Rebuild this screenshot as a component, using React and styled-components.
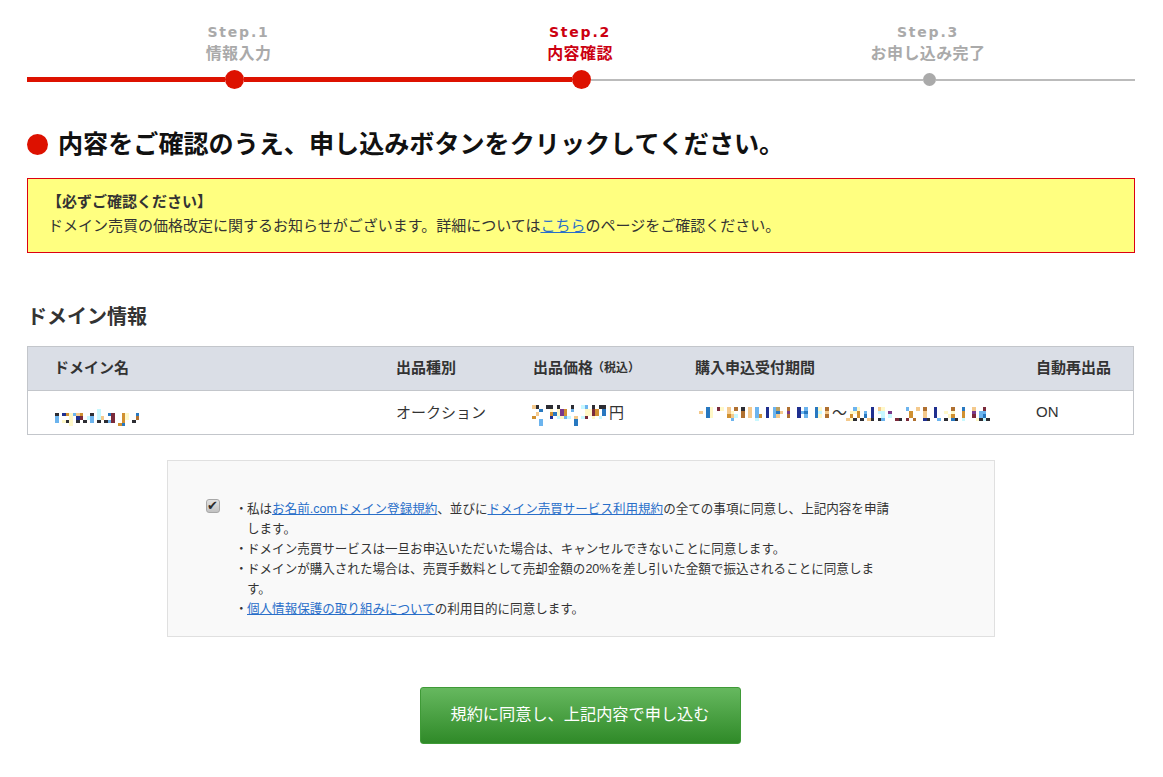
import React from 'react';
import styled, { createGlobalStyle } from 'styled-components';

const Global = createGlobalStyle`
  html, body { margin: 0; padding: 0; background: #fff; }
  body { font-family: "Liberation Sans", "Noto Sans CJK JP", sans-serif; color: #333; }
  * { box-sizing: border-box; }
`;
const Page = styled.div`
  width: 1163px;
  height: 777px;
  overflow: hidden;
  padding: 23px 28px 0 27px;
`;
const StepLabels = styled.div`
  display: grid;
  grid-template-columns: 341px 342px 354px;
  padding-left: 41px;
`;
const StepLabel = styled.div`
  text-align: center;
  font-weight: 700;
  color: ${p => (p.$active ? '#cc0011' : '#aaa')};
`;
const StepNum = styled.div`
  font-family: "DejaVu Sans", sans-serif;
  font-size: 14px;
  line-height: 19px;
  letter-spacing: 1.8px;
`;
const StepName = styled.div`
  font-size: 16px;
  line-height: 22px;
  letter-spacing: 0.4px;
  padding-top: 1px;
`;
const Track = styled.div`
  display: flex;
  align-items: center;
  height: 19px;
  margin-top: 5px;
`;
const Line = styled.div`
  height: ${p => (p.$on ? 5 : 2)}px;
  background: ${p => (p.$on ? '#dd1100' : '#bbb')};
  flex: ${p => (p.$w ? `0 0 ${p.$w}px` : '1')};
`;
const Dot = styled.div`
  flex: none;
  width: ${p => (p.$on ? 19 : 13)}px;
  height: ${p => (p.$on ? 19 : 13)}px;
  border-radius: 50%;
  background: ${p => (p.$on ? '#dd1100' : '#aaa')};
`;
const Heading = styled.h1`
  display: flex;
  align-items: center;
  gap: 10px;
  margin: 37px 0 0;
  font-size: 25.1px;
  line-height: 36px;
  font-weight: 700;
  color: #111;
  &::before {
    content: "";
    width: 21px;
    height: 21px;
    border-radius: 50%;
    background: #dd1100;
  }
`;
const Notice = styled.div`
  margin-top: 16px;
  height: 75px;
  padding: 11px 20px 0;
  background: #ffff80;
  border: 1px solid #dd0011;
  font-size: 15px;
  line-height: 24px;
  color: #333;
`;
const NoticeTitle = styled.div`
  font-weight: 700;
  margin-left: -1px;
`;
const Link = styled.a`
  color: #2a6fc9;
  text-decoration: underline;
`;
const SectionTitle = styled.h2`
  margin: 49px 0 0;
  font-size: 20px;
  line-height: 30px;
  font-weight: 700;
  color: #333;
`;
const Table = styled.div`
  margin-top: 14px;
  width: 1107px;
  border: 1px solid #c3c6cb;
`;
const Row = styled.div`
  display: grid;
  grid-template-columns: 342px 137px 162px 341px 1fr;
  padding-left: 26px;
  height: ${p => (p.$head ? 44 : 43)}px;
  align-items: center;
  font-size: 15px;
  background: ${p => (p.$head ? '#dadee6' : '#fff')};
  border-bottom: ${p => (p.$head ? '1px solid #c3c6cb' : 'none')};
  font-weight: ${p => (p.$head ? 700 : 400)};
  color: #333;
`;
const Small = styled.span`
  font-size: 12px;
  margin-left: -1px;
`;
const Cell = styled.div`
  display: flex;
  align-items: center;
  margin-top: ${p => (p.$head ? -4 : -3)}px;
`;
const Mosaic = styled.svg`
  display: block;
  flex: none;
  shape-rendering: crispEdges;
  margin: ${p => p.$mt || 0}px 0 0 ${p => p.$ml || 0}px;
`;
const Tilde = styled.span`
  margin: 0 -1px 0 0;
`;
const Agree = styled.div`
  display: flex;
  margin: 25px 0 0 140px;
  width: 828px;
  height: 177px;
  padding: 38px 0 0 38px;
  background: #f9f9f9;
  border: 1px solid #e0e0e0;
`;
const Check = styled.input`
  appearance: none;
  position: relative;
  flex: none;
  width: 14px;
  height: 14px;
  margin: 0 15px 0 0;
  border: 1px solid #a8a8a8;
  border-radius: 3px;
  background: linear-gradient(#e2e2e2, #c2c2c2);
  &::after {
    content: "✔";
    position: absolute;
    left: 0;
    top: -1px;
    font: 13px/14px "DejaVu Sans", sans-serif;
    color: #2b2b2b;
  }
`;
const Terms = styled.ul`
  list-style: none;
  margin: 0;
  padding: 0;
  width: 656px;
  font-size: 12.55px;
  line-height: 20px;
  color: #333;
`;
const Term = styled.li`
  padding-left: 12px;
  text-indent: -12px;
  &::before {
    content: "・";
    display: inline-block;
    width: 12px;
    text-indent: 0;
  }
`;
const Actions = styled.div`
  display: flex;
  justify-content: center;
  margin: 50px 0 0 -2px;
`;
const Submit = styled.button`
  width: 321px;
  height: 57px;
  padding: 0 0 5px;
  font: inherit;
  font-size: 16.2px;
  color: #fff;
  border: 1px solid #3f9a37;
  border-radius: 3px;
  background: linear-gradient(#66b85f, #2f8a28);
`;

const colors = {
  d: '#2d2d33', b: '#6cb4ee', t: '#f4c98c', o: '#d09030', n: '#1f2f8f', c: '#c8f8ff',
  y: '#fff8c8', r: '#7a2a3a', B: '#2878c0', p: '#7a3a8a', g: '#bba060', k: '#b07030',
};
const CELL = 3.5;
function MosaicText({ rows, mt, ml }) {
  const w = rows[0].length * CELL;
  const h = rows.length * CELL;
  return (
    <Mosaic $mt={mt} $ml={ml} width={w} height={h} viewBox={`0 0 ${w} ${h}`}>
      {rows.flatMap((row, y) =>
        [...row].map((ch, x) =>
          ch === '.' ? null : <rect key={`${x}-${y}`} x={x * CELL} y={y * CELL} width={CELL} height={CELL} fill={colors[ch]} />
        )
      )}
    </Mosaic>
  );
}
const domainRows = [
  '............c...........',
  'd.noybto..d.c..Br..oy..B',
  'b...y.nr.cb.ct..r..oy..k',
  'b.ydy.d.d.b.d.dbr..o..d.',
  '....y.............oB....',
];
const priceRows = [
  'td..dd.d...d..cb.d.dd.',
  '..B..y.ypo.b...yyro.B.',
  '.t...oBypo.....yyro.B.',
  'o....n.cybc.t.cr.y.c..',
  '..b.........B.........',
  '..b.........B.........',
];
const fromRows = [
  '..By.ry.t.k.d.t.b..n.bg..k..n.b..By.k.',
  't.By....ty..k.t.b..n.bBt.p..nbB..Bc.t.',
  '..By....otc.k.t.bo.n.bt..k..n.b..By.k.',
  '.........b......c.....................',
];
const toRows = [
  '..by...n.ty......b..t.k..n....k..B..t..r.',
  '.yyo.b.n.cc.p.....o...t..n..y.y..o..p.bb.',
  '.o.o.B.n..c.c.....o...t..n...yo..o..r.bB.',
  'tyd.d.td.db...rd.r.k..nd..b.d.Bd.c...ydcd',
];

export default function App() {
  return (
    <Page>
      <Global />
      <StepLabels>
        <StepLabel><StepNum>Step.1</StepNum><StepName>情報入力</StepName></StepLabel>
        <StepLabel $active><StepNum>Step.2</StepNum><StepName>内容確認</StepName></StepLabel>
        <StepLabel><StepNum>Step.3</StepNum><StepName>お申し込み完了</StepName></StepLabel>
      </StepLabels>
      <Track>
        <Line $on $w={198} />
        <Dot $on />
        <Line $on $w={328} />
        <Dot $on />
        <Line $w={332} />
        <Dot />
        <Line />
      </Track>
      <Heading>内容をご確認のうえ、申し込みボタンをクリックしてください。</Heading>
      <Notice>
        <NoticeTitle>【必ずご確認ください】</NoticeTitle>
        ドメイン売買の価格改定に関するお知らせがございます。詳細については<Link href="#">こちら</Link>のページをご確認ください。
      </Notice>
      <SectionTitle>ドメイン情報</SectionTitle>
      <Table>
        <Row $head>
          <Cell $head>ドメイン名</Cell>
          <Cell $head>出品種別</Cell>
          <Cell $head>出品価格<Small>（税込）</Small></Cell>
          <Cell $head>購入申込受付期間</Cell>
          <Cell $head>自動再出品</Cell>
        </Row>
        <Row>
          <Cell><MosaicText rows={domainRows} mt={13} ml={1} /></Cell>
          <Cell>オークション</Cell>
          <Cell><MosaicText rows={priceRows} mt={9} ml={-1} />円</Cell>
          <Cell><MosaicText rows={fromRows} mt={6} ml={4} /><Tilde>～</Tilde><MosaicText rows={toRows} mt={6} /></Cell>
          <Cell>ON</Cell>
        </Row>
      </Table>
      <Agree>
        <Check type="checkbox" defaultChecked />
        <Terms>
          <Term>私は<Link href="#">お名前.comドメイン登録規約</Link>、並びに<Link href="#">ドメイン売買サービス利用規約</Link>の全ての事項に同意し、上記内容を申請します。</Term>
          <Term>ドメイン売買サービスは一旦お申込いただいた場合は、キャンセルできないことに同意します。</Term>
          <Term>ドメインが購入された場合は、売買手数料として売却金額の20%を差し引いた金額で振込されることに同意します。</Term>
          <Term><Link href="#">個人情報保護の取り組みについて</Link>の利用目的に同意します。</Term>
        </Terms>
      </Agree>
      <Actions>
        <Submit type="button">規約に同意し、上記内容で申し込む</Submit>
      </Actions>
    </Page>
  );
}
